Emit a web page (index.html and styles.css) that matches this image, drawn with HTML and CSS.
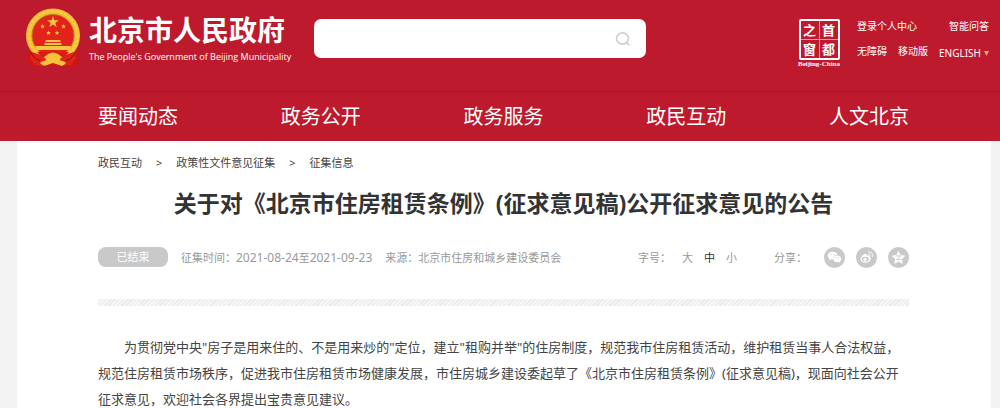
FILE: index.html
```html
<!DOCTYPE html>
<html lang="zh-CN">
<head>
  <meta charset="UTF-8">
  <meta name="viewport" content="width=device-width, initial-scale=1">
  <title>关于对《北京市住房租赁条例》(征求意见稿)公开征求意见的公告</title>
  <link rel="stylesheet" href="styles.css">
</head>
<body>
  <header class="header">
    <div class="header-top">
      <a class="logo" href="#">
        <svg class="emblem" viewBox="0 0 58 60" aria-hidden="true">
          <path d="M5 42 L4 54 L10 59 L22 57 L29 59 L36 57 L48 59 L54 54 L53 42 Z" fill="#d3150f"/>
          <circle cx="29" cy="27.500" r="27" fill="#f3bd36"/>
          <circle cx="29" cy="27.500" r="24.500" fill="none" stroke="#f9cf4e" stroke-width="2" stroke-dasharray="3 1.500"/>
          <circle cx="29" cy="27.500" r="21" fill="#e3231b" stroke="#b97912"/>
          <g fill="#f5c63f">
            <path d="M29 8l1.400 4.200h4.500l-3.600 2.700 1.400 4.300-3.700-2.600-3.700 2.600 1.400-4.300-3.600-2.700h4.500z"/>
            <path d="M18.500 16l.6 1.600h1.700l-1.300 1.100.5 1.700-1.500-1-1.500 1 .5-1.700-1.300-1.100h1.700zM39.500 16l.6 1.600h1.700l-1.300 1.100.5 1.700-1.500-1-1.500 1 .5-1.700-1.300-1.100h1.700zM24.500 22.500l.6 1.600h1.700l-1.300 1.100.5 1.700-1.500-1-1.500 1 .5-1.700-1.300-1.100h1.700zM33 22.500l.6 1.600h1.700L34 25.200l.5 1.700-1.500-1-1.500 1 .5-1.700-1.300-1.100h1.700z"/>
            <path d="M22 32h14l1 2h-16zM20.500 35h17v2h-17zM11 38h36l-1.500 4h-33z"/>
          </g>
          <path d="M13 44h32l-5 5H18z" fill="#d81b14"/>
          <path d="M8 44l9 3 5 4-2 7-9-1-5-7zM50 44l-9 3-5 4 2 7 9-1 5-7z" fill="#e02318"/>
          <path d="M24 46q5-3 10 0l4 3-5 3q-4-2-8 0l-5-3zM16 55q4-4 8-1l5-2 5 2q4-3 8 1-3 4-7 2l-6-2-6 2q-4 2-7-2z" fill="#f6c13b"/>
          <path d="M7 45q4 7 9 8M51 45q-4 7-9 8" fill="none" stroke="#8f1010"/>
        </svg>
        <span class="logo-text">
          <strong class="logo-name">北京市人民政府</strong>
          <span class="logo-sub">The People's Government of Beijing Municipality</span>
        </span>
      </a>

      <form class="search">
        <input class="search-input" type="text" aria-label="搜索">
        <button class="search-btn" type="button" aria-label="搜索">
          <svg viewBox="0 0 16 16" width="16" height="16" fill="none" stroke="#cfcfcf" stroke-width="1.600">
            <ellipse cx="7.500" cy="7.500" rx="6" ry="5.600"/>
            <path d="M11.500 11.500l3 2.800"/>
          </svg>
        </button>
      </form>

      <a class="seal" href="#">
        <span class="seal-box">
          <span>之</span><span>首</span><span>窗</span><span>都</span>
        </span>
        <span class="seal-sub">Beijing-China</span>
      </a>

      <div class="tools">
        <div class="tools-row">
          <a href="#">登录个人中心</a>
          <a href="#">智能问答</a>
        </div>
        <div class="tools-row">
          <a href="#">无障碍</a>
          <a href="#">移动版</a>
          <button class="lang" type="button">ENGLISH
            <svg viewBox="0 0 5 5" width="5" height="5" aria-hidden="true"><path d="M0 0h5L2.500 5z" fill="#d9a860"/></svg>
          </button>
        </div>
      </div>
    </div>

    <nav class="nav">
      <a href="#">要闻动态</a>
      <a href="#">政务公开</a>
      <a href="#">政务服务</a>
      <a href="#">政民互动</a>
      <a href="#">人文北京</a>
    </nav>
  </header>

  <main class="content">
    <div class="crumbs">
      <a href="#">政民互动</a>
      <span>&gt;</span>
      <a href="#">政策性文件意见征集</a>
      <span>&gt;</span>
      <a href="#">征集信息</a>
    </div>

    <h1 class="title">关于对《北京市住房租赁条例》(征求意见稿)公开征求意见的公告</h1>

    <div class="meta">
      <span class="status">已结束</span>
      <span>征集时间：<span class="date">2021-08-24</span>至<span class="date">2021-09-23</span></span>
      <span>来源：北京市住房和城乡建设委员会</span>
      <div class="font-size">
        <span>字号：</span>
        <button type="button">大</button>
        <button class="active" type="button">中</button>
        <button type="button">小</button>
      </div>
      <div class="share">
        <span>分享：</span>
        <a href="#" aria-label="微信">
          <svg viewBox="0 0 22 22" width="21" height="21">
            <circle cx="11" cy="11" r="11" fill="#c9c9c9"/>
            <path d="M9 5c-3 0-5 1.800-5 4 0 1.300.7 2.400 1.800 3.100L5.300 14l2.100-1.100 2 .2C9 10 11.500 8.200 14 8.300 13.500 6.300 11.500 5 9 5z" fill="#fff"/>
            <path d="M14 9c-2.500 0-4.300 1.500-4.300 3.500S11.500 16 14 16l1.300-.2 1.700.9-.4-1.500c1-.6 1.600-1.600 1.600-2.700C18.200 10.500 16.400 9 14 9z" fill="#fff"/>
            <g fill="#c9c9c9"><circle cx="7.300" cy="8" r=".7"/><circle cx="10.800" cy="8" r=".7"/><circle cx="12.600" cy="11.500" r=".6"/><circle cx="15.500" cy="11.500" r=".6"/></g>
          </svg>
        </a>
        <a href="#" aria-label="微博">
          <svg viewBox="0 0 22 22" width="21" height="21">
            <circle cx="11" cy="11" r="11" fill="#c9c9c9"/>
            <path d="M9.500 7.200c1-.3 1.700.2 1.400 1.700 2-.7 3.400-.3 2.900 1.400 1.500.5 2 1.500 1.600 2.700-.7 2-3.300 3.500-6 3.500-2.800 0-4.800-1.400-4.700-3.500.1-2.200 2.700-5.100 4.800-5.800z" fill="#fff"/>
            <ellipse cx="9.700" cy="12.800" rx="3.700" ry="2.500" fill="#c9c9c9"/>
            <circle cx="9.400" cy="13" r="1.700" fill="#fff"/>
            <path d="M13.300 7.500c1.300-.2 2.200.8 1.900 2M13 5.200c3-.5 5 1.800 4.300 4.800" fill="none" stroke="#fff" stroke-linecap="round"/>
          </svg>
        </a>
        <a href="#" aria-label="QQ空间">
          <svg viewBox="0 0 22 22" width="21" height="21">
            <circle cx="11" cy="11" r="11" fill="#c9c9c9"/>
            <path d="M11 3.800l2.200 4.700 5.100.6-3.800 3.500 1 5.100-4.500-2.500-4.500 2.500 1-5.100-3.800-3.500 5.100-.6z" fill="#fff"/>
            <path d="M8.500 9.300h4.800l-4.300 3.900h5" fill="none" stroke="#c9c9c9"/>
          </svg>
        </a>
      </div>
    </div>

    <div class="stripe"></div>

    <article class="article">
      <p>为贯彻党中央"房子是用来住的、不是用来炒的"定位，建立"租购并举"的住房制度，规范我市住房租赁活动，维护租赁当事人合法权益，规范住房租赁市场秩序，促进我市住房租赁市场健康发展，市住房城乡建设委起草了《北京市住房租赁条例》(征求意见稿)，现面向社会公开征求意见，欢迎社会各界提出宝贵意见建议。</p>
    </article>
  </main>
</body>
</html>
```
FILE: styles.css
```css
* {
  box-sizing: border-box;
}

body {
  margin: 0;
  background: #f3f3f3;
  color: #444;
  font-family: "Noto Sans", "Noto Sans CJK SC", sans-serif;
  font-size: 11px;
}

a {
  color: inherit;
  text-decoration: none;
}

button {
  padding: 0;
  border: 0;
  background: none;
  color: inherit;
  font: inherit;
  cursor: pointer;
}

svg {
  display: block;
}

/* Header */
.header {
  background: #bd1a2d;
  color: #fff;
}

.header-top {
  display: flex;
  align-items: flex-start;
  height: 92px;
  padding: 8px 11px 0 24px;
  border-bottom: 1px solid #a51425;
}

.logo {
  display: flex;
  gap: 7px;
  width: 290px;
}

.emblem {
  flex: none;
  width: 58px;
  height: 60px;
}

.logo-text {
  display: flex;
  flex-direction: column;
  padding-top: 4px;
  white-space: nowrap;
}

.logo-name {
  font-size: 28px;
  line-height: 36px;
}

.logo-sub {
  font-family: "Open Sans", sans-serif;
  font-size: 9px;
  line-height: 18px;
}

.search {
  display: flex;
  flex: 1;
  align-items: center;
  height: 39px;
  margin: 11px 150px 0 0;
  padding-right: 15px;
  background: #fff;
  border-radius: 7px;
}

.search-input {
  flex: 1;
  min-width: 0;
  height: 100%;
  padding: 0 12px;
  border: 0;
  background: transparent;
  font-size: 13px;
  outline: none;
}

.seal {
  display: flex;
  flex-direction: column;
  align-items: center;
  width: 46px;
  margin: 11px 15px 0 0;
}

.seal-box {
  display: grid;
  grid-template-columns: 1fr 1fr;
  gap: 1px;
  width: 41px;
  height: 41px;
  border: 2px solid #fff;
  border-radius: 2px;
  background: #e99aa4;
}

.seal-box span {
  background: #bd1a2d;
  font-family: "Noto Sans CJK SC", sans-serif;
  font-size: 13px;
  font-weight: bold;
  line-height: 18px;
  text-align: center;
}

.seal-sub {
  font-family: "Liberation Serif", serif;
  font-size: 7px;
  font-weight: bold;
  line-height: 8px;
}

.tools {
  width: 132px;
  padding-top: 9px;
  font-size: 10px;
  white-space: nowrap;
}

.tools-row {
  display: flex;
  align-items: center;
  justify-content: space-between;
  height: 16px;
  margin-bottom: 9px;
}

.lang {
  display: flex;
  align-items: center;
  gap: 3px;
  padding-top: 6px;
}

.nav {
  display: flex;
  justify-content: space-between;
  padding: 1px 91px 0 98px;
  font-size: 20px;
  line-height: 48px;
}

/* Content */
.content {
  margin: 0 9px 0 17px;
  padding: 0 82px 0 81px;
  background: #fff;
}

.crumbs {
  display: flex;
  gap: 14px;
  padding-top: 13px;
  line-height: 18px;
}

.title {
  margin: 14px 0 0;
  color: #333;
  font-size: 23px;
  line-height: 34px;
  text-align: center;
}

.meta {
  display: flex;
  align-items: center;
  gap: 13px;
  height: 22px;
  margin-top: 26px;
  color: #999;
  white-space: nowrap;
}

.status {
  width: 70px;
  border-radius: 8px;
  background: #c9c9c9;
  color: #fff;
  line-height: 20px;
  text-align: center;
}

.date {
  font-size: 12px;
}

.font-size {
  display: flex;
  gap: 11px;
  margin-left: auto;
}

.font-size .active {
  color: #333;
}

.share {
  display: flex;
  align-items: center;
  gap: 11px;
  margin-left: 24px;
}

.share span {
  margin-right: 6px;
}

.stripe {
  height: 7px;
  margin-top: 31px;
  background: repeating-linear-gradient(135deg, #e9e9e9 0 1px, #f6f6f6 1px 3px);
}

.article {
  padding-top: 28px;
  font-size: 13px;
  line-height: 26px;
}

.article p {
  margin: 0;
  text-indent: 2em;
}
```
